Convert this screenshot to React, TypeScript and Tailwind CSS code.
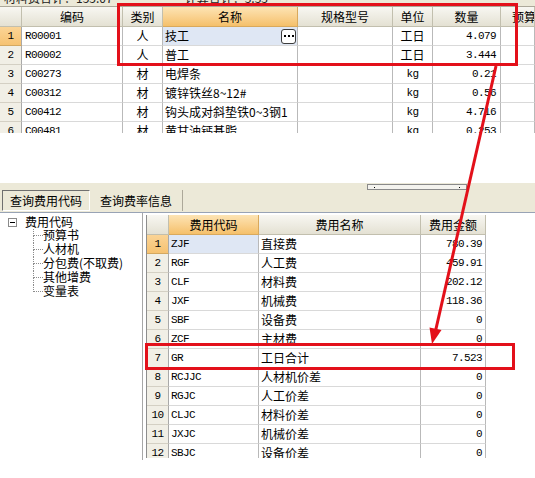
import React from 'react';

const cjk = "font-['Noto_Sans_CJK_SC',sans-serif] text-[12px] leading-none";
const mono = "font-['Liberation_Mono',monospace] text-[11px] tracking-[-0.6px] leading-none";

const topRows = [
  { n: 1, code: 'R00001', type: '人', name: '技工', unit: '工日', qty: '4.079' },
  { n: 2, code: 'R00002', type: '人', name: '普工', unit: '工日', qty: '3.444' },
  { n: 3, code: 'C00273', type: '材', name: '电焊条', unit: 'kg', qty: '0.21' },
  { n: 4, code: 'C00312', type: '材', name: '镀锌铁丝8~12#', unit: 'kg', qty: '0.56' },
  { n: 5, code: 'C00412', type: '材', name: '钩头成对斜垫铁0~3钢1', unit: 'kg', qty: '4.716' },
  { n: 6, code: 'C00481', type: '材', name: '黄甘油钙基脂', unit: 'kg', qty: '0.253' },
];

const feeRows = [
  { n: 1, code: 'ZJF', name: '直接费', amount: '780.39' },
  { n: 2, code: 'RGF', name: '人工费', amount: '459.91' },
  { n: 3, code: 'CLF', name: '材料费', amount: '202.12' },
  { n: 4, code: 'JXF', name: '机械费', amount: '118.36' },
  { n: 5, code: 'SBF', name: '设备费', amount: '0' },
  { n: 6, code: 'ZCF', name: '主材费', amount: '0' },
  { n: 7, code: 'GR', name: '工日合计', amount: '7.523' },
  { n: 8, code: 'RCJJC', name: '人材机价差', amount: '0' },
  { n: 9, code: 'RGJC', name: '人工价差', amount: '0' },
  { n: 10, code: 'CLJC', name: '材料价差', amount: '0' },
  { n: 11, code: 'JXJC', name: '机械价差', amount: '0' },
  { n: 12, code: 'SBJC', name: '设备价差', amount: '0' },
];

const treeItems = ['预算书', '人材机', '分包费(不取费)', '其他增费', '变量表'];

const head = 'h-[20px] flex items-center justify-center bg-linear-to-b from-[#f8f7f2] to-[#e4e1d3] border-r border-b border-[#c2bfae] text-black';
const headHot = 'h-[20px] flex items-center justify-center bg-linear-to-b from-[#fde4b4] to-[#f5c06a] border-r border-b border-[#d9a95c] text-black';
const cell = 'h-[19px] flex items-center border-r border-b border-r-[#b9b9b9] border-b-[#d9d9d9] bg-white text-black';
const numCell = 'h-[19px] flex items-center justify-center border-r border-b border-r-[#a9a9a9] border-b-[#d4d0c4] bg-[#f1efe6] text-black';
const numHot = 'h-[19px] flex items-center justify-center border-r border-b border-r-[#a9a9a9] border-b-[#d4a860] bg-linear-to-b from-[#fbd495] to-[#f6c271] text-black';

function TopGrid() {
  return (
    <div className="h-[133px] overflow-hidden">
      {/* summary strip, scrolled mostly out of view */}
      <div className="h-[7px] bg-[#ece9d8] border-b border-[#aca899] overflow-hidden flex">
        <span className={`${cjk} -mt-[8px] ml-[4px] text-[#222]`}>材料费合计：155.07</span>
        <span className={`${cjk} -mt-[8px] ml-[72px] text-[#222]`}>计算合计：3.33</span>
      </div>
      <div className="grid grid-cols-[22px_101px_40px_135px_95px_40px_68px_1fr]">
        <div className={head}></div>
        <div className={`${head} ${cjk}`}>编码</div>
        <div className={`${head} ${cjk}`}>类别</div>
        <div className={`${headHot} ${cjk}`}>名称</div>
        <div className={`${head} ${cjk}`}>规格型号</div>
        <div className={`${head} ${cjk}`}>单位</div>
        <div className={`${head} ${cjk}`}>数量</div>
        <div className={`${head} ${cjk} !justify-start pl-[11px] overflow-hidden whitespace-nowrap`}>预算价</div>

        {topRows.map((r) => (
          <React.Fragment key={r.n}>
            <div className={`${r.n === 1 ? numHot : numCell} ${mono}`}>{r.n}</div>
            <div className={`${cell} ${mono} pl-[3px]`}>{r.code}</div>
            <div className={`${cell} ${cjk} justify-center`}>{r.type}</div>
            {r.n === 1 ? (
              <div className={`${cell} ${cjk} !bg-[#dfe7f4] justify-between pl-[2px] pr-[1px]`}>
                <span>{r.name}</span>
                <span className="w-[15px] h-[15px] rounded-[3px] border border-[#3c3c3c] bg-white flex items-center justify-center gap-[2px]">
                  <span className="w-[2px] h-[2px] bg-black" />
                  <span className="w-[2px] h-[2px] bg-black" />
                  <span className="w-[2px] h-[2px] bg-black" />
                </span>
              </div>
            ) : (
              <div className={`${cell} ${cjk} pl-[2px] whitespace-nowrap overflow-hidden`}>{r.name}</div>
            )}
            <div className={cell}></div>
            <div className={`${cell} ${r.unit === 'kg' ? mono : cjk} justify-center`}>{r.unit}</div>
            <div className={`${cell} ${mono} justify-end pr-[4px]`}>{r.qty}</div>
            <div className={cell}></div>
          </React.Fragment>
        ))}
      </div>
    </div>
  );
}

function TabBand() {
  return (
    <div className="h-[30px] bg-[#ece9d8] border-b border-[#98a3b5] flex flex-col">
      <div className="h-[7px] pt-[1px] pl-[367px]">
        <div className="w-[100px] h-[6px] border border-[#8a8a8a] bg-[#f4f3ee] flex items-center justify-between px-[6px]">
          <span className="w-[1px] h-[1px] bg-black" />
          <span className="w-[1px] h-[1px] bg-black" />
        </div>
      </div>
      <div className="h-[21px] flex pl-[2px]">
        <div className={`${cjk} w-[88px] flex items-center justify-center border border-t-[#6f6f6f] border-l-[#6f6f6f] border-b-white border-r-white bg-[#ece9d8]`}>
          查询费用代码
        </div>
        <div className={`${cjk} w-[93px] flex items-center justify-center border-r border-[#aca899]`}>
          查询费率信息
        </div>
      </div>
    </div>
  );
}

function Tree() {
  return (
    <div className="w-[143px] h-[247px] bg-white border-r border-[#a7a7a7] pt-[2px] pl-[8px]">
      <div className="h-[14px] flex items-center">
        <span className="w-[9px] h-[9px] border border-[#8a8a8a] bg-white flex items-center justify-center">
          <span className="w-[5px] h-[1px] bg-black" />
        </span>
        <span className={`${cjk} ml-[8px] text-black`}>费用代码</span>
      </div>
      <div className="ml-[25px]">
        {treeItems.map((t, i) => (
          <div key={t} className="h-[14px] flex">
            <div className="w-[10px] flex flex-col">
              <div className="h-[7px] border-l border-b border-dotted border-[#8c8c8c]" />
              <div className={`h-[7px] ${i < treeItems.length - 1 ? 'border-l border-dotted border-[#8c8c8c]' : ''}`} />
            </div>
            <span className={`${cjk} leading-[14px] text-black whitespace-nowrap`}>{t}</span>
          </div>
        ))}
      </div>
    </div>
  );
}

function FeeGrid() {
  return (
    <div className="ml-[3px] h-[245px] overflow-hidden pt-[2px]">
      <div className="grid grid-cols-[22px_90px_162px_65px] border-l border-[#8d8d8d]">
        <div className={head}></div>
        <div className={`${headHot} ${cjk}`}>费用代码</div>
        <div className={`${head} ${cjk}`}>费用名称</div>
        <div className={`${head} ${cjk}`}>费用金额</div>
        {feeRows.map((r) => (
          <React.Fragment key={r.n}>
            <div className={`${r.n === 1 ? numHot : numCell} ${mono}`}>{r.n}</div>
            <div className={`${cell} ${mono} pl-[2px] ${r.n === 1 ? '!bg-[#dfe7f4]' : ''}`}>{r.code}</div>
            <div className={`${cell} ${cjk} pl-[2px]`}>{r.name}</div>
            <div className={`${cell} ${mono} justify-end pr-[3px]`}>{r.amount}</div>
          </React.Fragment>
        ))}
      </div>
    </div>
  );
}

export default function App() {
  return (
    <div className="relative w-[535px] h-[478px] overflow-hidden bg-white">
      <TopGrid />
      <div className="h-[50px] bg-white" />
      <TabBand />
      <div className="flex">
        <Tree />
        <FeeGrid />
      </div>

      {/* red annotation overlay */}
      <svg className="absolute inset-0 pointer-events-none" width="535" height="478" viewBox="0 0 535 478">
        <rect x="118.5" y="4.5" width="398" height="60" fill="none" stroke="#e3101a" strokeWidth="3" />
        <rect x="146.5" y="344.5" width="367" height="24" fill="none" stroke="#e3101a" strokeWidth="3" />
        <line x1="496" y1="66" x2="435.5" y2="331" stroke="#e3101a" strokeWidth="3" />
        <polygon points="432,344 441.5,330 429.5,327.5" fill="#e3101a" />
      </svg>
    </div>
  );
}
